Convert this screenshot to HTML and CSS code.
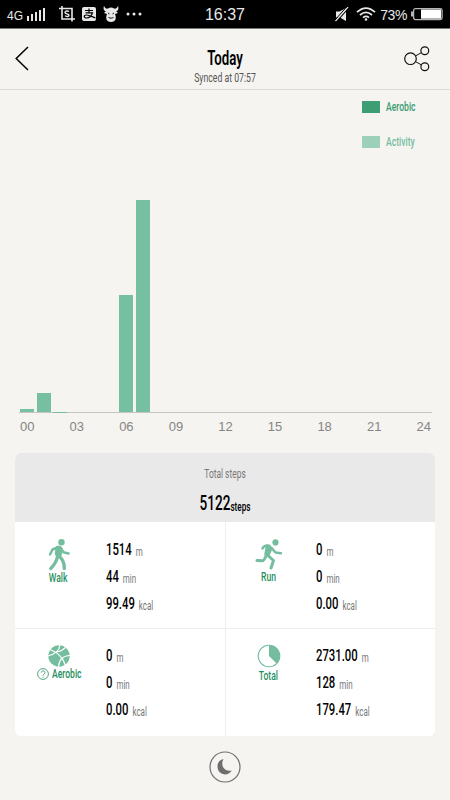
FILE: index.html
```html
<!DOCTYPE html>
<html lang="en">
<head>
    <meta charset="UTF-8">
    <meta name="viewport" content="width=device-width, initial-scale=1.0">
    <title>Today</title>
    <link rel="stylesheet" href="styles.css">
</head>
<body>
    <div class="status-bar">
        <div class="status-left">
            <span class="network">4G</span>
            <svg class="signal" width="18" height="13" viewBox="0 0 18 13" fill="#e8e8e8">
                <path d="M0 8h2v5H0zM4 6h2v7H4zM8 4h2v9H8zM12 2h2v11h-2zM16 0h2v13h-2z"/>
            </svg>
            <svg class="crop" width="16" height="16" viewBox="0 0 16 16" fill="none" stroke="#e8e8e8" stroke-width="1.6">
                <path d="M0 2.5h13v13M3 0v13h13"/>
                <path d="M10 5.600C9 4.700 6 4.700 6 6.400S10 7.500 10 9.200 7 10.700 6 9.600" stroke-width="1.400"/>
            </svg>
            <svg class="pay" width="14" height="14" viewBox="0 0 14 14">
                <rect width="14" height="14" rx="2" fill="#e8e8e8"/>
                <path d="M3 3.500h8M7 1.500v4M3.500 5.800h7C9.500 9 7 11 4.500 11 1.500 11 1.500 8 4.500 8c3 0 5 1.500 9 3" fill="none" stroke="#000" stroke-width="1.200"/>
            </svg>
            <svg class="bull" width="16" height="16" viewBox="0 0 16 16">
                <path d="M1 0C0 3 1 5 3 5L1 7l3 1c-2 5 0 8 4 8s6-3 4-8l3-1-2-2c2 0 3-2 2-5-1 2-2 3-4 2.500Q8 .500 5 2.500C3 3 2 2 1 0z" fill="#e8e8e8"/>
                <path d="M5 7l1.500 1M11 7L9.500 8M5.500 11.500q2.500 1.500 5 0" fill="none" stroke="#000" stroke-width=".9"/>
            </svg>
            <svg class="more" width="16" height="4" viewBox="0 0 16 4" fill="#e8e8e8">
                <circle cx="2" cy="2" r="1.500"/><circle cx="8" cy="2" r="1.500"/><circle cx="14" cy="2" r="1.500"/>
            </svg>
        </div>
        <div class="clock">16:37</div>
        <div class="status-right">
            <svg width="14" height="15" viewBox="0 0 14 15">
                <path d="M1 4.500h3.500L11 1v13l-6-3.500H1z" fill="#e8e8e8"/>
                <path d="M1.500 14.500L13.500 1" stroke="#000" stroke-width="1.200"/>
                <path d="M.5 14L13 0" stroke="#e8e8e8" stroke-width="1.200"/>
                <path d="M0 13L11.500 0" stroke="#000" stroke-width="1"/>
            </svg>
            <svg class="wifi" width="20" height="14" viewBox="0 0 20 14" fill="none" stroke="#e8e8e8" stroke-width="1.800">
                <path d="M1 5.200Q10-3 19 5.200M4 8q6-5.200 12 0M7 10.600q3-2.400 6 0"/>
                <circle cx="10" cy="12.500" r="1.300" fill="#e8e8e8" stroke="none"/>
            </svg>
            <span class="percent">73%</span>
            <svg class="battery" width="33" height="14" viewBox="0 0 33 14">
                <rect x="3.600" y="1.600" width="28.500" height="11" rx="1.800" fill="none" stroke="#b5b5b5" stroke-width="1.300"/>
                <rect x="11" y="2.500" width="20" height="9.200" fill="#fff"/>
                <path d="M1 4.500h2v5H1z" fill="#b5b5b5"/>
            </svg>
        </div>
    </div>

    <header class="header">
        <svg class="back" width="14" height="25" viewBox="0 0 14 25" fill="none" stroke="#000" stroke-width="1.500">
            <path d="M13 1L1.200 12.500 13 24"/>
        </svg>
        <div class="heading">
            <h1 class="title narrow">Today</h1>
            <div class="synced narrow">Synced at 07:57</div>
        </div>
        <svg class="share" width="26" height="26" viewBox="0 0 26 26" fill="none" stroke="#111" stroke-width="1.200">
            <circle cx="6.500" cy="12.700" r="5.800"/>
            <circle cx="20.800" cy="4.700" r="3.900"/>
            <circle cx="20.800" cy="20.800" r="3.900"/>
            <path d="M11.600 9.900l5.800-3.300M11.600 15.600l5.800 3.300" stroke-width="1"/>
        </svg>
    </header>

    <section class="chart">
        <div class="legend">
            <div class="legend-item aerobic"><i class="swatch"></i><span class="narrow">Aerobic</span></div>
            <div class="legend-item activity"><i class="swatch"></i><span class="narrow">Activity</span></div>
        </div>
        <div class="bars">
            <div class="bar" style="height: 3.500px"></div>
            <div class="bar" style="height: 19px"></div>
            <div class="bar" style="height: 0.500px"></div>
            <div class="bar" style="height: 0"></div>
            <div class="bar" style="height: 0"></div>
            <div class="bar" style="height: 0"></div>
            <div class="bar" style="height: 117px"></div>
            <div class="bar" style="height: 212px"></div>
        </div>
        <div class="hours">
            <span>00</span><span>03</span><span>06</span><span>09</span><span>12</span><span>15</span><span>18</span><span>21</span><span>24</span>
        </div>
    </section>

    <section class="card">
        <div class="total">
            <div class="total-label narrow">Total steps</div>
            <div class="total-value narrow">5122<small>steps</small></div>
        </div>
        <div class="grid">
            <div class="cell">
                <div class="kind">
                    <svg width="24" height="32" viewBox="0 0 24 32" fill="none" stroke="#74be9f" stroke-linecap="round" stroke-linejoin="round">
                        <circle cx="14.500" cy="3.300" r="3.200" fill="#74be9f" stroke="none"/>
                        <path d="M9.500 7.500Q13.500 6 15 9L14 17l-4 1.500-1.500-3z" fill="#74be9f" stroke-width="1"/>
                        <path d="M10.500 8.500L5.500 10.500 3 15.500M14 9.500l2.500 3.700 5 1.300" stroke-width="2.500"/>
                        <path d="M10.500 17.500Q9.500 23.500 3.800 29.500M12.500 17.500q5 4.500 4.800 12" stroke-width="3.300"/>
                    </svg>
                    <div class="kind-name narrow">Walk</div>
                </div>
                <div class="values">
                    <div class="value narrow">1514<small>m</small></div>
                    <div class="value narrow">44<small>min</small></div>
                    <div class="value narrow">99.49<small>kcal</small></div>
                </div>
            </div>
            <div class="cell">
                <div class="kind">
                    <svg width="28" height="31" viewBox="0 0 28 31" fill="none" stroke="#74be9f" stroke-linecap="round" stroke-linejoin="round">
                        <circle cx="20.500" cy="3.400" r="3.100" fill="#74be9f" stroke="none"/>
                        <path d="M12 7l4.500 2-3.500 8-2.500-1.500z" fill="#74be9f" stroke-width="2.500"/>
                        <path d="M14.500 6.800Q9.500 5.500 7.500 9.500M17 9.500l3.500 4 5.500.7" stroke-width="2.500"/>
                        <path d="M11 17Q9 21.500 7.500 21.800L2 21.500M13.500 17l5 4.500-2.500 7.500" stroke-width="3"/>
                    </svg>
                    <div class="kind-name narrow">Run</div>
                </div>
                <div class="values">
                    <div class="value narrow">0<small>m</small></div>
                    <div class="value narrow">0<small>min</small></div>
                    <div class="value narrow">0.00<small>kcal</small></div>
                </div>
            </div>
            <div class="cell">
                <div class="kind ball">
                    <svg width="22" height="22" viewBox="0 0 22 22">
                        <circle cx="11" cy="11" r="10.700" fill="#74be9f"/>
                        <path d="M11.500 0Q12.500 7.500 0 11M2 4.500Q14 9 17.500 20.500M22 10.500Q11 11 10.500 22M9.500 7Q14 6 17.500 2.500M12.500 12" fill="none" stroke="#fff" stroke-width="1.200"/>
                    </svg>
                    <div class="kind-row">
                        <svg width="12" height="12" viewBox="0 0 12 12" fill="none" stroke="#3f9b73" stroke-width=".9">
                            <circle cx="6" cy="6" r="5.400"/>
                            <path d="M4.200 4.600C4.200 2.400 8 2.400 8 4.500 8 6 6 6 6 7.700M6 8.700v1"/>
                        </svg>
                        <div class="kind-name narrow">Aerobic</div>
                    </div>
                </div>
                <div class="values">
                    <div class="value narrow">0<small>m</small></div>
                    <div class="value narrow">0<small>min</small></div>
                    <div class="value narrow">0.00<small>kcal</small></div>
                </div>
            </div>
            <div class="cell">
                <div class="kind pie">
                    <svg width="24" height="24" viewBox="0 0 24 24">
                        <circle cx="12" cy="12" r="10.800" fill="none" stroke="#74be9f" stroke-width="1.100"/>
                        <path d="M12 12V1.200A10.800 10.800 0 0 1 19.600 19.600z" fill="#74be9f"/>
                    </svg>
                    <div class="kind-name narrow">Total</div>
                </div>
                <div class="values">
                    <div class="value narrow">2731.00<small>m</small></div>
                    <div class="value narrow">128<small>min</small></div>
                    <div class="value narrow">179.47<small>kcal</small></div>
                </div>
            </div>
        </div>
    </section>

    <footer class="footer">
        <svg width="32" height="32" viewBox="0 0 32 32">
            <circle cx="16" cy="16" r="15" fill="none" stroke="#6e6e6e" stroke-width="1.200"/>
            <path d="M14.500 8C7 9.500 7 19 12 22.300 16 24.700 21 23 22.800 19.500 19 20.500 15.500 19 14 16 12.800 13.500 13 10.500 14.500 8z" fill="#6e6e6e"/>
        </svg>
    </footer>
</body>
</html>
```

FILE: styles.css
```css
* {
    box-sizing: border-box;
}

body {
    width: 450px;
    height: 800px;
    margin: 0;
    background: #f5f4f0;
    font-family: Roboto, sans-serif;
    color: #000;
    overflow: hidden;
}

svg {
    display: block;
    flex: none;
}

/* condensed lettering */
.narrow {
    transform: scaleX(0.68);
    white-space: nowrap;
}

.status-bar {
    display: grid;
    grid-template-columns: 1fr auto 1fr;
    align-items: center;
    height: 29px;
    padding: 0 7px;
    background: #000;
    border-bottom: 1px solid #777;
    color: #e8e8e8;
    font-family: "Liberation Sans", Arial, sans-serif;
}

.status-left,
.status-right {
    display: flex;
    align-items: center;
}

.status-right {
    justify-content: flex-end;
}

.network {
    width: 20px;
    font-size: 12px;
    padding-top: 3px;
}

.crop {
    margin-left: 14px;
}

.pay {
    margin-left: 7px;
}

.bull {
    margin-left: 7px;
}

.more {
    margin-left: 7px;
}

.clock {
    font-size: 16px;
    padding-top: 2px;
}

.wifi {
    margin-left: 7px;
}

.percent {
    margin: 2px 3px 0 4px;
    font-size: 14px;
    letter-spacing: -0.4px;
}

.header {
    display: flex;
    justify-content: space-between;
    height: 61px;
    padding: 17px 20px 0 15px;
    border-bottom: 1px solid #dddcd9;
}

.heading {
    flex: 1;
    padding-left: 17px;
    text-align: center;
}

.title {
    margin: 1px 0 0;
    font-size: 19.5px;
    line-height: 24px;
    font-weight: 600;
}

.synced {
    font-size: 12px;
    line-height: 14px;
    margin-top: 0;
    color: #555;
    transform: scaleX(0.725);
}

.chart {
    display: flex;
    flex-direction: column;
    height: 363px;
    padding: 11px 18px 0 19px;
}

.legend {
    align-self: flex-end;
    width: 70px;
}

.legend-item {
    display: flex;
    align-items: center;
    height: 12px;
    margin-bottom: 23px;
    font-size: 12px;
    font-weight: 500;
}

.legend-item .narrow {
    transform: scaleX(0.715);
    transform-origin: left;
}

.swatch {
    width: 18px;
    height: 12px;
    margin-right: 6px;
}

.aerobic {
    color: #3b9c72;
}

.aerobic .swatch {
    background: #3f9d75;
}

.activity {
    color: #74be9f;
}

.activity .swatch {
    background: #9cd0b9;
}

.bars {
    display: grid;
    grid-template-columns: repeat(25, 14px);
    column-gap: 2.5px;
    align-items: end;
    height: 242px;
    padding-left: 1px;
    border-bottom: 1px solid #c6c5c2;
}

.bar {
    background: #77bfa1;
}

.hours {
    display: flex;
    justify-content: space-between;
    padding: 6px 1px 0;
    color: #858585;
    font: 13px/16px "Liberation Sans", Arial, sans-serif;
}

.card {
    margin: 0 15px;
    border-radius: 6px;
    background: #fff;
    overflow: hidden;
}

.total {
    height: 69px;
    padding-top: 13px;
    background: #e9e9e9;
    text-align: center;
}

.total-label {
    font-size: 12px;
    line-height: 16px;
    color: #777;
    transform: scaleX(0.7);
}

.total-value {
    margin-top: 9px;
    font-size: 20px;
    line-height: 24px;
    font-weight: 500;
}

.total-value small {
    position: relative;
    top: 1px;
    font-size: 12px;
}

.grid {
    display: grid;
    grid-template-columns: 211px 1fr;
    grid-auto-rows: 107px;
}

.cell {
    display: flex;
}

.cell:nth-child(odd) {
    border-right: 1px solid #eee;
}

.cell:nth-child(even) {
    margin-left: -1px;
}

.cell:nth-child(-n+2) {
    border-bottom: 1px solid #eee;
}

.kind {
    display: flex;
    flex-direction: column;
    align-items: center;
    width: 87px;
    padding-top: 17px;
    flex: none;
}

.kind-name {
    color: #1f8f60;
    font-size: 12px;
    line-height: 14px;
    font-weight: 500;
    transform: scaleX(0.715);
}

.kind.ball,
.kind.pie {
    padding-top: 16px;
}

.kind.pie {
    padding-top: 15px;
}

.pie .kind-name {
    margin-top: 1px;
}

.ball .kind-name {
    transform-origin: left;
    width: 29px;
}

.kind-row {
    display: flex;
    align-items: center;
    gap: 3px;
}

.values {
    padding: 14px 0 0 4px;
}

.cell:nth-child(n+3) .values {
    padding-top: 13px;
}

.value {
    height: 27px;
    font-size: 17px;
    line-height: 27px;
    font-weight: 500;
    transform: scaleX(0.665);
    transform-origin: left;
}

.value small {
    position: relative;
    top: 1px;
    margin-left: 6px;
    color: #777;
    font-size: 12px;
    font-weight: 400;
}

.footer {
    display: flex;
    justify-content: center;
    padding-top: 15px;
}
```
